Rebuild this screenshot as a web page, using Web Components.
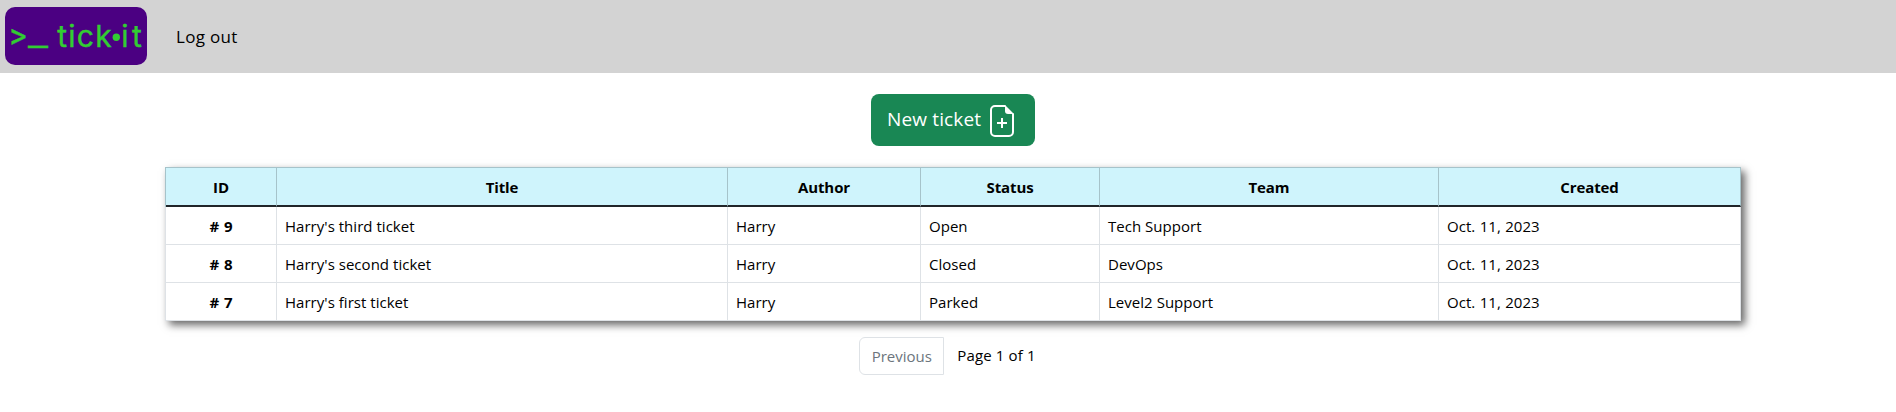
<!DOCTYPE html>
<html lang="en">
<head>
<meta charset="utf-8">
<title>tick•it</title>
<style>
body{margin:0;background:#fff;color:#000;font:15px/24px "Open Sans","Noto Sans",sans-serif;min-height:412px}
</style>
</head>
<body>
<ticket-app></ticket-app>
<script>
function define(name, html) {
  const template = document.createElement('template');
  template.innerHTML = html;
  customElements.define(name, class extends HTMLElement {
    constructor() {
      super();
      this.attachShadow({mode: 'open'}).appendChild(template.content.cloneNode(true));
    }
  });
}

define('tick-logo', `
<style>
:host{display:block;width:142px;height:58px;border-radius:10px;background:#4b0082}
svg{display:block}
text{font-family:Inter,sans-serif;fill:#32cd32;stroke:#32cd32;stroke-width:.4}
.prompt{font-family:Roboto,sans-serif}
</style>
<svg width="142" height="58" viewBox="0 0 142 58">
<text class="prompt" y="40.5" font-size="35"><tspan x="4.6" textLength="17" lengthAdjust="spacingAndGlyphs">&gt;</tspan><tspan x="23" y="38.5" font-size="32" textLength="20" lengthAdjust="spacingAndGlyphs">_</tspan></text>
<text x="52.2" y="40" font-size="30" textLength="54.5" lengthAdjust="spacing">tick</text>
<circle cx="111.3" cy="30.3" r="3.7" fill="#32cd32"/>
<text x="116.3" y="40" font-size="30" textLength="20.5" lengthAdjust="spacing">it</text>
</svg>`);

define('nav-bar', `
<style>
:host{display:flex;align-items:center;height:73px;padding-left:5px;gap:29px;background:#d3d3d3;box-sizing:border-box}
tick-logo{margin-bottom:1px}
a{font-size:17px;line-height:26px;letter-spacing:.3px}
</style>
<tick-logo></tick-logo><a><slot></slot></a>`);

define('new-button', `
<style>
:host{display:flex;box-sizing:border-box;width:164px;height:52px;padding:0 21px 0 16px;border-radius:8px;background:#198754;color:#fff;align-items:center;justify-content:space-between;font-size:19px}
span{position:relative;top:-1px;white-space:nowrap;letter-spacing:.15px}
svg{position:relative;top:1px}
</style>
<span><slot></slot></span>
<svg width="24" height="32" viewBox="0 0 24 32" fill="none" stroke="#fff" stroke-width="2">
<path d="M15.5 1H5a4 4 0 0 0-4 4v22a4 4 0 0 0 4 4h14a4 4 0 0 0 4-4V8.5"/>
<path d="M15 0l9 9h-6a3 3 0 0 1-3-3z" fill="#fff" stroke="none"/>
<path d="M12 13v10M7 18h10"/>
</svg>`);

define('page-nav', `
<style>
:host{display:flex;gap:13px;align-items:flex-start}
button{box-sizing:border-box;width:85px;height:38px;padding:0;border:1px solid #dee2e6;border-radius:6px 0 0 6px;background:#fff;color:#6c757d;font:inherit}
span{line-height:37px;letter-spacing:.15px}
</style>
<button>Previous</button><span><slot></slot></span>`);

const columns = [['ID',111],['Title',451],['Author',193],['Status',179],['Team',339],['Created',302]];
const tickets = [
  ['# 9', "Harry's third ticket", 'Harry', 'Open', 'Tech Support', 'Oct. 11, 2023'],
  ['# 8', "Harry's second ticket", 'Harry', 'Closed', 'DevOps', 'Oct. 11, 2023'],
  ['# 7', "Harry's first ticket", 'Harry', 'Parked', 'Level2 Support', 'Oct. 11, 2023']
];
define('ticket-table', `
<style>
:host{display:block;width:1576px;box-shadow:4px 4px 8px rgba(0,0,0,.6)}
table{width:1576px;table-layout:fixed;border-collapse:separate;border-spacing:0;border-left:1px solid #dee2e6;background:#fff}
th,td{box-sizing:border-box;padding:0 8px;border:0 solid #dee2e6;border-width:0 1px 1px 0;height:38px;text-align:left;white-space:nowrap;letter-spacing:.03px}
td:last-child{word-spacing:.5px}
th{text-align:center;font-weight:700;letter-spacing:-.1px;word-spacing:1px}
thead th{height:40px;background:#cff4fc;border-color:#a6c3ca;border-top-width:1px;border-bottom:2px solid #212529}
thead th:first-child{box-shadow:-1px 0 #a6c3ca}
</style>
<table><colgroup>${columns.map(c => `<col style="width:${c[1]}px">`).join('')}</colgroup>
<thead><tr>${columns.map(c => `<th>${c[0]}</th>`).join('')}</tr></thead>
<tbody>${tickets.map(t => `<tr>${t.map((v, i) => i ? `<td>${v}</td>` : `<th>${v}</th>`).join('')}</tr>`).join('')}</tbody></table>`);

define('ticket-app', `
<style>
:host{display:block}
main{display:flex;flex-direction:column;align-items:center;padding:21px 0 0 10px}
ticket-table{margin:21px 0 16px}
page-nav{margin-right:11px}
</style>
<nav-bar>Log out</nav-bar>
<main>
<new-button>New ticket</new-button>
<ticket-table></ticket-table>
<page-nav>Page 1 of 1</page-nav>
</main>`);
</script>
</body>
</html>
